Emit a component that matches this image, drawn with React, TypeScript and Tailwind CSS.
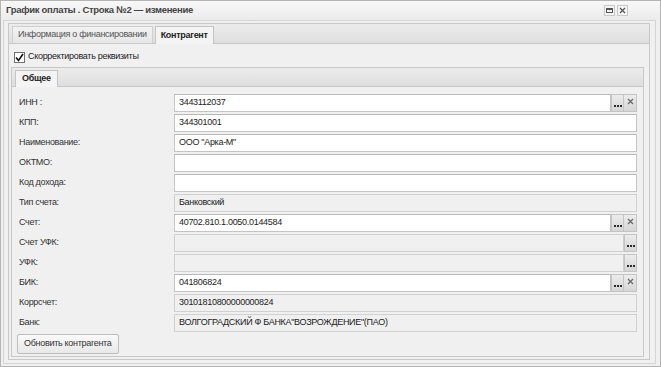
import React from 'react';

type Row = {
  label: string;
  value?: string;
  disabled?: boolean;
  dots?: boolean;
  clear?: boolean;
};

const rows: Row[] = [
  { label: 'ИНН :', value: '3443112037', dots: true, clear: true },
  { label: 'КПП:', value: '344301001' },
  { label: 'Наименование:', value: 'ООО "Арка-М"' },
  { label: 'ОКТМО:' },
  { label: 'Код дохода:' },
  { label: 'Тип счета:', value: 'Банковский', disabled: true },
  { label: 'Счет:', value: '40702.810.1.0050.0144584', dots: true, clear: true },
  { label: 'Счет УФК:', disabled: true, dots: true },
  { label: 'УФК:', disabled: true, dots: true },
  { label: 'БИК:', value: '041806824', dots: true, clear: true },
  { label: 'Коррсчет:', value: '30101810800000000824', disabled: true },
  { label: 'Банк:', value: 'ВОЛГОГРАДСКИЙ Ф БАНКА"ВОЗРОЖДЕНИЕ"(ПАО)', disabled: true },
];

const DotsButton = () => (
  <div className="w-[13px] h-[18px] border border-[#c4c4c4] bg-gradient-to-b from-[#ececec] to-[#d6d6d6] flex items-end justify-center pb-[4px]">
    <div className="flex gap-[1px]">
      <span className="w-[2px] h-[2px] bg-[#2a2a2a]" />
      <span className="w-[2px] h-[2px] bg-[#2a2a2a]" />
      <span className="w-[2px] h-[2px] bg-[#2a2a2a]" />
    </div>
  </div>
);

const ClearButton = () => (
  <div className="w-[13px] h-[18px] border border-[#c4c4c4] border-l-0 bg-gradient-to-b from-[#ececec] to-[#d6d6d6] flex items-start justify-center pt-[3px]">
    <svg width="7" height="7" viewBox="0 0 7 7">
      <path d="M1 1 L6 6 M6 1 L1 6" stroke="#6a6a6a" strokeWidth="1.3" />
    </svg>
  </div>
);

const Field = ({ row }: { row: Row }) => (
  <div className="flex items-center h-[20px]">
    <div className="w-[162px] pl-[7px] text-[#333]">{row.label}</div>
    <div className="flex flex-1 h-[18px]">
      <div
        className={`flex-1 border border-[#c4c4c4] flex items-center pl-[4px] text-[#222] ${
          row.disabled ? 'bg-[#f0f0f0] border-[#d0d0d0]' : 'bg-white border-t-[#b8b8b8]'
        }`}
      >
        {row.value}
      </div>
      {row.dots && <DotsButton />}
      {row.clear && <ClearButton />}
    </div>
  </div>
);

export default function App() {
  return (
    <div className="w-[661px] h-[367px] bg-[#f0f0f0] border border-[#b4b4b4] flex flex-col font-['Liberation_Sans',Arial,sans-serif] text-[9px] tracking-[-0.3px] text-[#333] overflow-hidden">
      {/* title bar */}
      <div className="h-[19px] flex items-center pl-[5px] pr-[32px] bg-gradient-to-b from-[#f8f8f8] to-[#ebebeb]">
        <span className="font-bold text-[#444] text-[9.5px]">График оплаты . Строка №2 — изменение</span>
        <div className="ml-auto flex gap-[2px] items-center">
          <div className="w-[11px] h-[11px] border border-[#c8c8c8] bg-[#f4f4f4] flex items-center justify-center">
            <div className="w-[7px] h-[5px] border border-[#555] border-t-2" />
          </div>
          <div className="w-[11px] h-[11px] border border-[#c8c8c8] bg-[#f4f4f4] flex items-center justify-center">
            <svg width="7" height="7" viewBox="0 0 7 7">
              <path d="M1 1 L6 6 M6 1 L1 6" stroke="#555" strokeWidth="1.2" />
            </svg>
          </div>
        </div>
      </div>

      {/* body frame */}
      <div className="flex-1 ml-[2px] mr-[4px] mb-[2px] border border-[#d4d4d4] pl-[4px] pr-[5px] pt-[2px] pb-[3px] flex flex-col">
        {/* outer tab panel */}
        <div className="flex-1 flex flex-col border border-[#c8c8c8]">
          <div className="h-[20px] flex items-end pl-[3px] gap-[2px] bg-gradient-to-b from-[#ececec] to-[#dedede] border-b border-[#c8c8c8]">
            <div className="h-[17px] px-[5px] flex items-center border border-b-0 border-[#cfcfcf] bg-gradient-to-b from-[#f2f2f2] to-[#e6e6e6] text-[#555]">
              Информация о финансировании
            </div>
            <div className="h-[18px] px-[5px] flex items-center border border-b-0 border-[#c4c4c4] bg-[#f4f4f4] font-bold text-[#222] -mb-[1px]">
              Контрагент
            </div>
          </div>

          <div className="flex-1 flex flex-col pl-[2px] pr-[5px] pb-[2px]">
            <div className="h-[22px] flex items-center pl-[3px] gap-[3px] pt-[4px]">
              <div className="w-[11px] h-[11px] border border-[#707070] bg-white flex items-center justify-center">
                <svg width="9" height="9" viewBox="0 0 9 9">
                  <path d="M1 4.5 L3.5 7.5 L8 1" stroke="#111" strokeWidth="1.6" fill="none" />
                </svg>
              </div>
              <span className="text-[#222]">Скорректировать реквизиты</span>
            </div>

            {/* inner tab panel */}
            <div className="flex-1 flex flex-col border border-[#c8c8c8] mt-[1px]">
              <div className="h-[19px] flex items-end pl-[3px] bg-gradient-to-b from-[#ececec] to-[#dedede] border-b border-[#c8c8c8]">
                <div className="h-[17px] px-[6px] flex items-center border border-b-0 border-[#c4c4c4] bg-[#f4f4f4] font-bold text-[#222] -mb-[1px]">
                  Общее
                </div>
              </div>
              <div className="flex-1 pt-[6px] pr-[6px] flex flex-col">
                {rows.map((r, i) => (
                  <Field key={i} row={r} />
                ))}
                <div className="pl-[5px] pt-[1px]">
                  <div className="inline-flex items-center h-[20px] px-[6px] border border-[#bdbdbd] rounded-[2px] bg-gradient-to-b from-[#fafafa] to-[#e8e8e8] text-[#333]">
                    Обновить контрагента
                  </div>
                </div>
              </div>
            </div>
          </div>
        </div>
      </div>
    </div>
  );
}
